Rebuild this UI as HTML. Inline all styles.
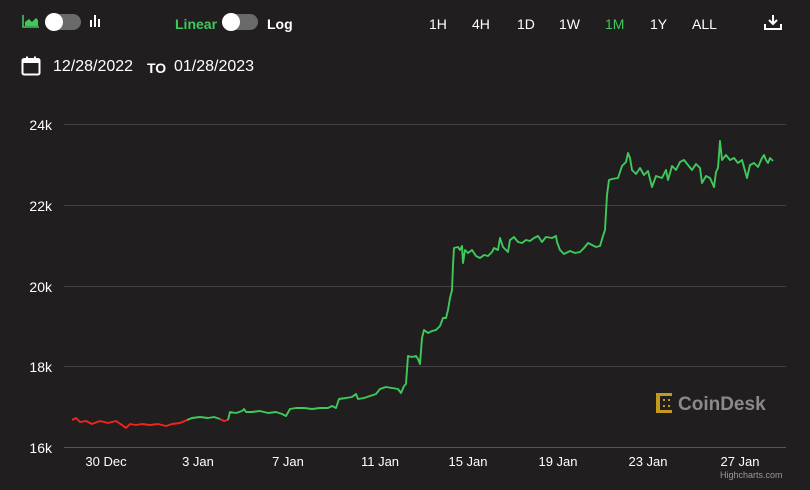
<!DOCTYPE html>
<html><head><meta charset="utf-8"><style>
*{margin:0;padding:0;box-sizing:border-box}
body{width:810px;height:490px;background:#211e20;font-family:"Liberation Sans",sans-serif;color:#fff;position:relative;overflow:hidden}
.t{position:absolute;font-size:14px;white-space:nowrap}
.b{font-weight:bold}
.tog{position:absolute;width:35px;height:16px;border-radius:8px;background:#6b6a6b}
.tog i{position:absolute;left:-1px;top:-1px;width:18px;height:18px;border-radius:50%;background:#fff}
.yl{position:absolute;right:758px;font-size:14px;color:#fff}
.xl{position:absolute;top:454px;font-size:13px;color:#fff;transform:translateX(-50%)}
</style></head><body>
<svg style="position:absolute;left:22px;top:14px" width="18" height="14" viewBox="0 0 18 14"><path d="M1 1V13H17" stroke="#3ec95a" stroke-width="1.6" fill="none"/><path d="M3 12V8L7 5L10 8L14 4L16 6V12Z" fill="#3ec95a"/></svg>
<div class="tog" style="left:46px;top:14px"><i></i></div>
<svg style="position:absolute;left:90px;top:14px" width="12" height="14"><rect x="0" y="6" width="2" height="7" fill="#fff"/><rect x="4" y="1" width="2" height="12" fill="#fff"/><rect x="8" y="5" width="2" height="8" fill="#fff"/></svg>
<div class="t b" style="left:175px;top:16px;color:#3ec95a">Linear</div>
<div class="tog" style="left:223px;top:14px"><i></i></div>
<div class="t b" style="left:267px;top:16px">Log</div>
<div class="t" style="left:429px;top:16px">1H</div>
<div class="t" style="left:472px;top:16px">4H</div>
<div class="t" style="left:517px;top:16px">1D</div>
<div class="t" style="left:559px;top:16px">1W</div>
<div class="t" style="left:605px;top:16px;color:#3ec95a">1M</div>
<div class="t" style="left:650px;top:16px">1Y</div>
<div class="t" style="left:692px;top:16px">ALL</div>
<svg style="position:absolute;left:764px;top:14px" width="18" height="17" viewBox="0 0 18 17"><path d="M9 1V10M5 6L9 10L13 6M1 10V15H17V10" stroke="#fff" stroke-width="2" fill="none"/></svg>
<svg style="position:absolute;left:21px;top:56px" width="20" height="20" viewBox="0 0 20 20"><rect x="1.5" y="3" width="17" height="15.5" rx="1.5" stroke="#fff" stroke-width="2" fill="none"/><rect x="1.5" y="3" width="17" height="4" fill="#fff"/><rect x="5" y="0.5" width="2" height="4" fill="#fff"/><rect x="13" y="0.5" width="2" height="4" fill="#fff"/></svg>
<div class="t" style="left:53px;top:58px;font-size:16px">12/28/2022</div>
<div class="t b" style="left:147px;top:60px">TO</div>
<div class="t" style="left:174px;top:58px;font-size:16px">01/28/2023</div>
<svg style="position:absolute;left:0;top:0" width="810" height="490">
<g stroke="#444042" stroke-width="1"><line x1="64" y1="124.5" x2="786" y2="124.5"/><line x1="64" y1="205.5" x2="786" y2="205.5"/><line x1="64" y1="286.5" x2="786" y2="286.5"/><line x1="64" y1="366.5" x2="786" y2="366.5"/></g>
<line x1="64" y1="447.5" x2="786" y2="447.5" stroke="#5a5759" stroke-width="1"/>
<g fill="none" stroke-width="1.9" stroke-linejoin="round">
<polyline stroke="#f0261b" points="72,420 76,418 80,422 86,421 92,424 100,421 108,423 116,421 122,425 126,428 130,424 136,425 142,424 150,425 158,424 166,426 172,424 180,423 187,420"/>
<polyline stroke="#3ec95a" points="187,420 192,418 200,417 208,418 214,417 220,419"/>
<polyline stroke="#f0261b" points="220,419 224,421 228,420"/>
<polyline stroke="#3ec95a" points="228,420 230,412 236,413 242,411 244,409 246,412 252,412 260,411 268,413 276,412 282,414 286,416 290,409 296,408 304,408 312,409 320,408 328,408 332,406 336,408 339,399 346,398 352,397 356,394 358,399 364,398 370,396 376,394 380,389 386,387 392,388 398,389 401,393 404,386 406,384 408,356 412,357 416,356 418,359 420,364 422,338 424,330 428,333 432,331 436,330 440,326 443,318 446,318 448,310 450,298 452,290 453,265 454,248 458,247 460,250 462,246 463,263 465,250 468,253 472,250 476,256 480,258 484,255 488,256 492,252 494,248 498,250 500,238 503,247 508,252 510,240 514,237 518,242 522,243 526,240 530,241 534,238 538,236 542,242 546,237 552,238 556,236 557,242 560,250 564,254 570,251 575,253 580,252 584,248 588,243 592,245 596,247 600,246 603,236 605,230 607,195 609,180 612,179 618,178 622,166 626,162 628,153 630,158 632,170 636,174 640,168 644,175 648,171 652,187 656,176 662,178 666,170 668,180 672,166 676,170 680,162 684,160 688,165 692,170 696,164 700,168 702,183 706,176 710,178 714,187 716,172 718,168 720,141 722,160 726,155 730,160 734,158 738,163 742,160 747,178 750,165 754,163 758,167 762,158 764,155 766,160 768,163 770,158 773,161"/>
</g>
<g fill="#c29a1e"><rect x="656" y="393" width="4" height="20"/><rect x="656" y="393" width="16" height="3"/><rect x="656" y="410" width="16" height="3"/><rect x="663" y="399" width="2" height="2"/><rect x="668" y="399" width="2" height="2"/><rect x="663" y="405" width="2" height="2"/><rect x="668" y="405" width="2" height="2"/></g>
<text x="678" y="410" font-family="Liberation Sans" font-weight="bold" font-size="19" fill="#8b898b">CoinDesk</text>
</svg>
<div class="yl" style="top:117px">24k</div>
<div class="yl" style="top:198px">22k</div>
<div class="yl" style="top:279px">20k</div>
<div class="yl" style="top:359px">18k</div>
<div class="yl" style="top:440px">16k</div>
<div class="xl" style="left:106px">30 Dec</div>
<div class="xl" style="left:198px">3 Jan</div>
<div class="xl" style="left:288px">7 Jan</div>
<div class="xl" style="left:380px">11 Jan</div>
<div class="xl" style="left:468px">15 Jan</div>
<div class="xl" style="left:558px">19 Jan</div>
<div class="xl" style="left:648px">23 Jan</div>
<div class="xl" style="left:740px">27 Jan</div>
<div class="t" style="left:720px;top:470px;font-size:9px;color:#999">Highcharts.com</div>
</body></html>
